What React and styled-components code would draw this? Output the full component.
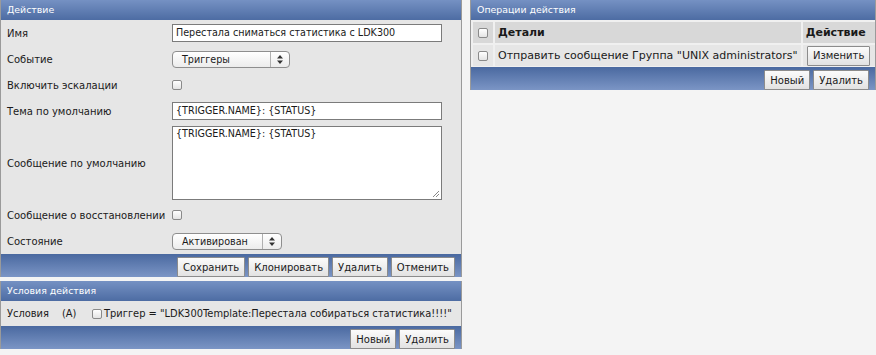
import React from 'react';
import styled, { createGlobalStyle } from 'styled-components';

const GlobalStyle = createGlobalStyle`
  body {
    margin: 0;
    background: #f4f4f4;
    font-family: "DejaVu Sans", Verdana, sans-serif;
    font-size: 10px;
    color: #1a1a1a;
  }
`;

const Page = styled.div`
  display: flex;
  align-items: flex-start;
  gap: 8px;
  width: 876px;
`;

const Column = styled.div`
  display: flex;
  flex-direction: column;
  gap: 4px;
  width: ${p => p.$width}px;
  flex: none;
`;

const Panel = styled.div`
  background: #e6e6e6;
  border-left: 1px solid #9a9a9a;
  border-right: 1px solid #9a9a9a;
`;

const Header = styled.div`
  height: 20px;
  line-height: 20px;
  padding-left: 6px;
  font-size: 9.4px;
  color: #fff;
  background: linear-gradient(#7591c3, #4d6ca3);
`;

const Bar = styled.div`
  display: flex;
  justify-content: flex-end;
  gap: 3px;
  height: 23px;
  padding: 3px 6px 0 0;
  box-sizing: border-box;
  background: linear-gradient(#4a69a0, #7b95c5);
`;

const Button = styled.button`
  height: 20px;
  padding: 0 5px;
  font-family: inherit;
  font-size: 10px;
  color: #1a1a1a;
  background: linear-gradient(#fbfbfb, #e2e2e2);
  border: 1px solid #8c8c8c;
  border-radius: 1px;
  white-space: nowrap;
`;

const Row = styled.div`
  display: flex;
  align-items: center;
  min-height: ${p => p.$h || 26}px;
  padding: 0 6px;
`;

const Label = styled.div`
  width: 165px;
  flex: none;
  white-space: nowrap;
`;

const TextInput = styled.div`
  width: 262px;
  height: 16px;
  line-height: 15px;
  padding: 0 3px;
  font-size: 9.6px;
  background: #fff;
  border: 1px solid #7b7b7b;
  white-space: nowrap;
`;

const TextArea = styled.div`
  position: relative;
  width: 262px;
  height: 70px;
  padding: 1px 3px;
  font-size: 9.6px;
  background: #fff;
  border: 1px solid #7b7b7b;
`;

const Grip = styled.svg`
  position: absolute;
  right: 1px;
  bottom: 1px;
`;

const Select = styled.div`
  display: flex;
  align-items: center;
  width: ${p => p.$width}px;
  height: 17px;
  box-sizing: border-box;
  border: 1px solid #8e8e8e;
  border-radius: 4px;
  font-size: 9.6px;
  background: linear-gradient(#ffffff, #ececec);
`;

const SelectText = styled.span`
  flex: 1;
  padding-left: 9px;
`;

const SelectArrow = styled.span`
  display: flex;
  align-items: center;
  justify-content: center;
  width: 18px;
  height: 100%;
  border-left: 1px solid #b0b0b0;
`;

const Check = styled.span`
  display: inline-block;
  flex: none;
  width: 10px;
  height: 10px;
  box-sizing: border-box;
  border: 1px solid #8a8a8a;
  border-radius: 2px;
  background: linear-gradient(#ffffff, #e4e4e4);
  margin-right: ${p => p.$mr || 0}px;
`;

const CondRow = styled.div`
  display: flex;
  align-items: center;
  height: 25px;
  padding: 0 6px;
  font-size: 9.9px;
  white-space: nowrap;
  background: #e6e6e6;
`;

const CondLabel = styled.span`
  width: 55px;
  flex: none;
`;

const CondLetter = styled.span`
  width: 30px;
  flex: none;
`;

const Table = styled.div`
  display: grid;
  grid-template-columns: 20px 1fr 72px;
  gap: 2px;
  padding: 2px 2px 1px;
  font-size: 11px;
  background: #f0f0f0;
`;

const Cell = styled.div`
  display: flex;
  align-items: center;
  justify-content: ${p => (p.$center ? 'center' : 'flex-start')};
  height: 21px;
  padding: ${p => (p.$center ? '0' : '0 3px')};
  background: ${p => (p.$head ? '#d8d8d8' : '#e6e6e6')};
  font-weight: ${p => (p.$head ? 'bold' : 'normal')};
  white-space: nowrap;
`;

function Arrows() {
  return (
    <svg width="6" height="9" viewBox="0 0 6 9">
      <path d="M3 0 L6 3.5 H0 Z M3 9 L6 5.5 H0 Z" fill="#333" />
    </svg>
  );
}

function SelectBox({ width, children }) {
  return (
    <Select $width={width}>
      <SelectText>{children}</SelectText>
      <SelectArrow><Arrows /></SelectArrow>
    </Select>
  );
}

export default function App() {
  return (
    <>
      <GlobalStyle />
      <Page>
        <Column $width={462}>
          <Panel>
            <Header>Действие</Header>
            <Row>
              <Label>Имя</Label>
              <TextInput>Перестала сниматься статистика с LDK300</TextInput>
            </Row>
            <Row>
              <Label>Событие</Label>
              <SelectBox width={118}>Триггеры</SelectBox>
            </Row>
            <Row>
              <Label>Включить эскалации</Label>
              <Check />
            </Row>
            <Row>
              <Label>Тема по умолчанию</Label>
              <TextInput>{'{TRIGGER.NAME}: {STATUS}'}</TextInput>
            </Row>
            <Row $h={78}>
              <Label>Сообщение по умолчанию</Label>
              <TextArea>
                {'{TRIGGER.NAME}: {STATUS}'}
                <Grip width="9" height="9" viewBox="0 0 9 9">
                  <path d="M8 2 L2 8 M8 5 L5 8" stroke="#888" strokeWidth="1" />
                </Grip>
              </TextArea>
            </Row>
            <Row>
              <Label>Сообщение о восстановлении</Label>
              <Check />
            </Row>
            <Row>
              <Label>Состояние</Label>
              <SelectBox width={110}>Активирован</SelectBox>
            </Row>
            <Bar>
              <Button>Сохранить</Button>
              <Button>Клонировать</Button>
              <Button>Удалить</Button>
              <Button>Отменить</Button>
            </Bar>
          </Panel>
          <Panel>
            <Header>Условия действия</Header>
            <CondRow>
              <CondLabel>Условия</CondLabel>
              <CondLetter>(A)</CondLetter>
              <Check $mr={2} />
              Триггер = "LDK300Template:Перестала собираться статистика!!!!"
            </CondRow>
            <Bar>
              <Button>Новый</Button>
              <Button>Удалить</Button>
            </Bar>
          </Panel>
        </Column>
        <Column $width={406}>
          <Panel>
            <Header>Операции действия</Header>
            <Table>
              <Cell $head $center><Check /></Cell>
              <Cell $head>Детали</Cell>
              <Cell $head>Действие</Cell>
              <Cell $center><Check /></Cell>
              <Cell>Отправить сообщение Группа "UNIX administrators"</Cell>
              <Cell $center><Button>Изменить</Button></Cell>
            </Table>
            <Bar>
              <Button>Новый</Button>
              <Button>Удалить</Button>
            </Bar>
          </Panel>
        </Column>
      </Page>
    </>
  );
}
